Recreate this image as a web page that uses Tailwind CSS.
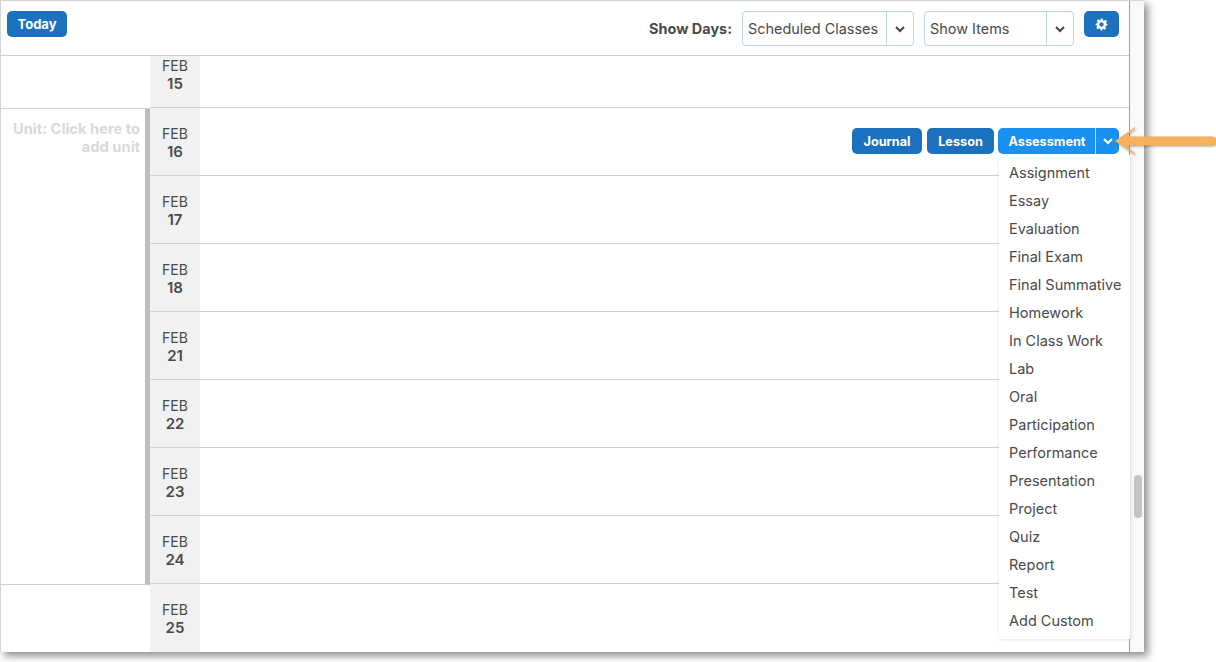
<!DOCTYPE html>
<html lang="en">
<head>
    <meta charset="UTF-8">
    <title>Planner</title>
    <script src="https://cdn.jsdelivr.net/npm/@tailwindcss/browser@4"></script>
</head>
<body class="bg-white w-[1216px] h-[662px] overflow-hidden font-['Inter',sans-serif] text-[#4a4a4a]">
    <div class="relative w-[1144px] h-[652px] bg-[#f9f9f9] border-t border-l border-[#d4d4d4] shadow-[4px_4px_8px_rgba(0,0,0,0.45)]">
        <div class="w-[1129px] h-[651px] overflow-hidden bg-white border-r border-r-[#7f9fc9]">
            <!-- Toolbar -->
            <div class="h-[55px] border-b border-[#cfcfcf] flex items-start pt-[10px] pl-[6px] pr-[10px]">
                <button class="h-[26px] w-[60px] pt-[1px] rounded-[5px] bg-[#1b71bd] text-white text-[13px] font-bold">Today</button>
                <span class="ml-auto mt-[9px] text-[14.45px] leading-[17px] font-bold text-[#4a4a4a]">Show Days:</span>
                <div class="ml-[10px] w-[172px] h-[35px] flex border border-[#bcd3e8] rounded-[4px] text-[14.45px] text-[#4a4a4a]">
                    <span class="flex-1 pl-[5px] leading-[33px] whitespace-nowrap">Scheduled Classes</span>
                    <span class="w-[27px] border-l border-[#bcd3e8] flex items-center justify-center">
                        <svg class="w-[10px] h-[10px]" viewBox="0 0 10 10" fill="none" stroke="#444" stroke-width="2"><path d="M1 3l4 4 4-4"/></svg>
                    </span>
                </div>
                <div class="ml-[10px] w-[150px] h-[35px] flex border border-[#bcd3e8] rounded-[4px] text-[14.45px] text-[#4a4a4a]">
                    <span class="flex-1 pl-[5px] leading-[33px]">Show Items</span>
                    <span class="w-[27px] border-l border-[#bcd3e8] flex items-center justify-center">
                        <svg class="w-[10px] h-[10px]" viewBox="0 0 10 10" fill="none" stroke="#444" stroke-width="2"><path d="M1 3l4 4 4-4"/></svg>
                    </span>
                </div>
                <button class="ml-[10px] w-[35px] h-[26px] rounded-[5px] bg-[#1b71bd] flex items-center justify-center">
                    <svg class="w-[13px] h-[13px]" viewBox="0 0 24 24" fill="#fff"><path fill-rule="evenodd" d="M10 1h4l.7 3.2 1.9.8 2.8-1.8 2.8 2.8-1.8 2.8.8 1.9L23 10.4v3.2l-3.2.7-.8 1.9 1.8 2.8-2.8 2.8-2.8-1.8-1.9.8L13.6 23h-3.2l-.7-3.2-1.9-.8-2.8 1.8-2.8-2.8 1.8-2.8-.8-1.9L1 13.6v-3.2l3.2-.7.8-1.9-1.8-2.8 2.8-2.8 2.8 1.8 1.9-.8L10 1zm2 7a4 4 0 100 8 4 4 0 000-8z"/></svg>
                </button>
            </div>

            <!-- Feb 15 -->
            <div class="h-[52px] flex items-start">
                <div class="w-[149px] h-[53px] border-b border-[#cfcfcf]"></div>
                <div class="w-[50px] h-[52px] bg-[#f1f1f1] border-b border-[#cfcfcf] text-center text-[14px] leading-[18px] pt-[1px]">FEB<br><b class="font-semibold text-[15px]">15</b></div>
                <div class="flex-1 h-[52px] border-b border-[#cfcfcf]"></div>
            </div>

            <!-- Unit block -->
            <div class="flex h-[476px]">
                <div class="w-[149px] h-[476px] mt-[1px] pt-[11px] pr-[5px] text-right text-[14.7px] leading-[18px] font-bold text-[#d9d9d9] border-r-[5px] border-[#bdbdbd] border-b border-b-[#cfcfcf]">
                    Unit: Click here to add unit
                </div>
                <div class="flex-1">
                    <div class="h-[68px] flex border-b border-[#cfcfcf]">
                        <div class="w-[50px] bg-[#f1f1f1] text-center text-[14px] leading-[18px] pt-[17px]">FEB<br><b class="font-semibold text-[15px]">16</b></div>
                        <div class="flex-1 flex justify-end items-start pt-[20px] pr-[10px] text-white text-[12.7px] font-bold">
                            <button class="h-[26px] w-[70px] pt-[1px] rounded-[5px] bg-[#1b71bd]">Journal</button>
                            <button class="ml-[5px] h-[26px] w-[67px] pt-[1px] rounded-[5px] bg-[#1b71bd]">Lesson</button>
                            <div class="ml-[4px] h-[26px] w-[121px] rounded-[5px] bg-[#1a90f0] flex">
                                <span class="flex-1 pl-[1px] text-center leading-[27px]">Assessment</span>
                                <span class="w-[24px] border-l border-white/70 flex items-center justify-center">
                                    <svg class="w-[10px] h-[10px]" viewBox="0 0 10 10" fill="none" stroke="#fff" stroke-width="2"><path d="M1 3l4 4 4-4"/></svg>
                                </span>
                            </div>
                        </div>
                    </div>
                    <div class="h-[68px] flex border-b border-[#cfcfcf]">
                        <div class="w-[50px] bg-[#f1f1f1] text-center text-[14px] leading-[18px] pt-[17px]">FEB<br><b class="font-semibold text-[15px]">17</b></div>
                    </div>
                    <div class="h-[68px] flex border-b border-[#cfcfcf]">
                        <div class="w-[50px] bg-[#f1f1f1] text-center text-[14px] leading-[18px] pt-[17px]">FEB<br><b class="font-semibold text-[15px]">18</b></div>
                    </div>
                    <div class="h-[68px] flex border-b border-[#cfcfcf]">
                        <div class="w-[50px] bg-[#f1f1f1] text-center text-[14px] leading-[18px] pt-[17px]">FEB<br><b class="font-semibold text-[15px]">21</b></div>
                    </div>
                    <div class="h-[68px] flex border-b border-[#cfcfcf]">
                        <div class="w-[50px] bg-[#f1f1f1] text-center text-[14px] leading-[18px] pt-[17px]">FEB<br><b class="font-semibold text-[15px]">22</b></div>
                    </div>
                    <div class="h-[68px] flex border-b border-[#cfcfcf]">
                        <div class="w-[50px] bg-[#f1f1f1] text-center text-[14px] leading-[18px] pt-[17px]">FEB<br><b class="font-semibold text-[15px]">23</b></div>
                    </div>
                    <div class="h-[68px] flex border-b border-[#cfcfcf]">
                        <div class="w-[50px] bg-[#f1f1f1] text-center text-[14px] leading-[18px] pt-[17px]">FEB<br><b class="font-semibold text-[15px]">24</b></div>
                    </div>
                </div>
            </div>

            <!-- Feb 25 -->
            <div class="h-[68px] flex">
                <div class="w-[149px]"></div>
                <div class="w-[50px] bg-[#f1f1f1] text-center text-[14px] leading-[18px] pt-[17px]">FEB<br><b class="font-semibold text-[15px]">25</b></div>
            </div>
        </div>

        <!-- Dropdown menu -->
        <div class="absolute left-[998px] top-[154px] w-[132px] h-[484px] bg-white border-r border-[#e4e4e4] shadow-[0_1px_3px_rgba(0,0,0,0.1)] pl-[10px] pt-[4px] text-[14.5px] leading-[28px] text-[#4a4a4a]">
            <div>Assignment</div>
            <div>Essay</div>
            <div>Evaluation</div>
            <div>Final Exam</div>
            <div>Final Summative</div>
            <div>Homework</div>
            <div>In Class Work</div>
            <div>Lab</div>
            <div>Oral</div>
            <div>Participation</div>
            <div>Performance</div>
            <div>Presentation</div>
            <div>Project</div>
            <div>Quiz</div>
            <div>Report</div>
            <div>Test</div>
            <div>Add Custom</div>
        </div>

        <!-- Scrollbar thumb -->
        <div class="absolute left-[1133px] top-[474px] w-[8px] h-[43px] rounded-[4px] bg-[#c4c4c4]"></div>
    </div>

    <!-- Callout arrow -->
    <svg class="absolute left-[1112px] top-[124px] w-[104px] h-[32px] drop-shadow-[1px_1px_1px_rgba(0,0,0,0.35)]" viewBox="0 0 104 32">
        <path d="M3.500 17L23 3.500l-10 9.500h87a4 4 0 010 8H13l10 9.500z" fill="#f9b25c" stroke="#f9b25c" stroke-linejoin="round"/>
    </svg>
</body>
</html>
